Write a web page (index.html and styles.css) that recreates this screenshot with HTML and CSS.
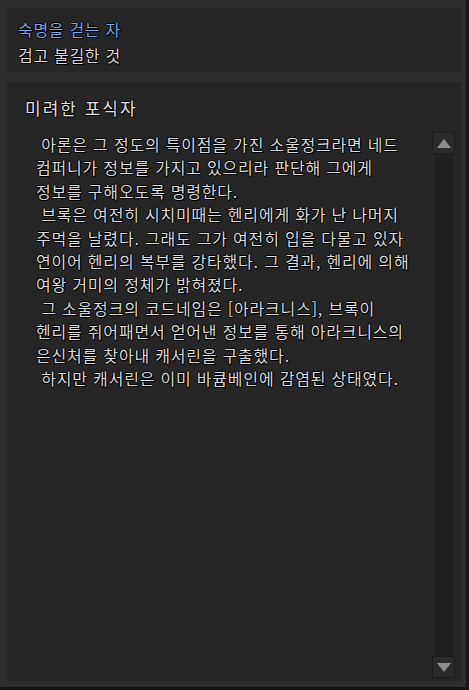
FILE: index.html
```html
<!DOCTYPE html>
<html lang="ko">
<head>
<meta charset="utf-8">
<link rel="stylesheet" href="styles.css">
</head>
<body>
<div class="frame">
  <section class="top-panel">
    <div class="quest">숙명을 걷는 자</div>
    <div class="sub">검고 불길한 것</div>
  </section>
  <section class="main-panel">
    <h1 class="title">미려한 포식자</h1>
    <div class="content">
      <div class="text">
        <p>&nbsp;아론은 그 정도의 특이점을 가진 소울정크라면 네드<br>컴퍼니가 정보를 가지고 있으리라 판단해 그에게<br>정보를 구해오도록 명령한다.</p>
        <p>&nbsp;브록은 여전히 시치미때는 헨리에게 화가 난 나머지<br>주먹을 날렸다. 그래도 그가 여전히 입을 다물고 있자<br>연이어 헨리의 복부를 강타했다. 그 결과, 헨리에 의해<br>여왕 거미의 정체가 밝혀졌다.</p>
        <p>&nbsp;그 소울정크의 코드네임은 [아라크니스], 브록이<br>헨리를 쥐어패면서 얻어낸 정보를 통해 아라크니스의<br>은신처를 찾아내 캐서린을 구출했다.</p>
        <p>&nbsp;하지만 캐서린은 이미 바큠베인에 감염된 상태였다.</p>
      </div>
      <div class="scrollbar">
        <div class="sb-btn"><svg width="14" height="9" viewBox="0 0 14 9"><polygon points="7,0 14,9 0,9" fill="#8c8c92"/></svg></div>
        <div class="sb-track"></div>
        <div class="sb-btn"><svg width="14" height="9" viewBox="0 0 14 9"><polygon points="0,0 14,0 7,9" fill="#8c8c92"/></svg></div>
      </div>
    </div>
  </section>
</div>
</body>
</html>
```
FILE: styles.css
```css
html, body {
  margin: 0;
  padding: 0;
  background: #2e2e2e;
}
body {
  width: 469px;
  height: 690px;
  overflow: hidden;
  font-family: "Noto Sans CJK KR", "Noto Sans", sans-serif;
}
.frame {
  box-sizing: border-box;
  width: 469px;
  height: 690px;
  padding: 8px 5px 6px 7px;
  border-right: 3px solid #141414;
  border-bottom: 3px solid #141414;
  background: #2e2e2e;
  display: flex;
  flex-direction: column;
  gap: 10px;
}
.top-panel {
  height: 64px;
  background: #262626;
  box-sizing: border-box;
  padding: 8px 0 0 11px;
  font-size: 16px;
  line-height: 26px;
  letter-spacing: 0.7px;
  white-space: nowrap;
  text-shadow: 1px 1px 0 #000, -1px 0 0 #000, 0 -1px 0 #000, 1px 0 0 #000, 0 1px 0 #000;
}
.quest { color: #7aa8ea; }
.sub { color: #dcdcdc; }
.main-panel {
  flex: 1;
  background: #262626;
  display: flex;
  flex-direction: column;
  min-height: 0;
}
.title {
  margin: 0;
  padding: 12px 0 0 18px;
  height: 37px;
  box-sizing: border-box;
  font-size: 17px;
  line-height: 27px;
  font-weight: normal;
  letter-spacing: 2px;
  color: #e2e2e2;
  white-space: nowrap;
  text-shadow: 1px 1px 0 #000, -1px 0 0 #000, 0 -1px 0 #000, 1px 0 0 #000, 0 1px 0 #000;
}
.content {
  flex: 1;
  display: flex;
  min-height: 0;
  padding: 13px 6px 3px 29px;
}
.text {
  flex: 1;
  color: #dcdcdc;
  font-size: 16px;
  line-height: 23.4px;
  letter-spacing: 0.8px;
  padding-top: 1px;
  white-space: nowrap;
  overflow: hidden;
  text-shadow: 1px 1px 0 #000, -1px 0 0 #000, 0 -1px 0 #000, 1px 0 0 #000, 0 1px 0 #000;
}
.text p { margin: 0; }
.scrollbar {
  width: 23px;
  display: flex;
  flex-direction: column;
  align-items: center;
}
.sb-btn {
  box-sizing: border-box;
  width: 23px;
  height: 22px;
  background: #2b2b2b;
  border: 1px solid #1c1c1c;
  display: flex;
  align-items: center;
  justify-content: center;
}
.sb-track {
  flex: 1;
  width: 19px;
  background: #1f1f1f;
}
```
